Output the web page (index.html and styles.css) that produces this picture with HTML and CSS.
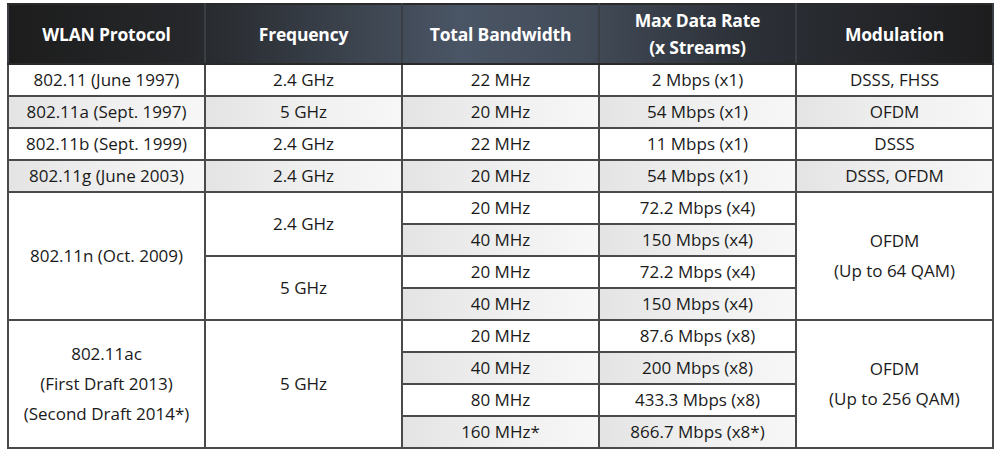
FILE: index.html
```html
<!DOCTYPE html>
<html>
<head>
<meta charset="utf-8">
<link rel="stylesheet" href="styles.css">
</head>
<body>
<table class="wlan">
  <colgroup><col><col><col><col><col></colgroup>
  <thead>
    <tr class="head">
      <th>WLAN Protocol</th>
      <th>Frequency</th>
      <th>Total Bandwidth</th>
      <th class="two">Max Data Rate<br>(x Streams)</th>
      <th>Modulation</th>
    </tr>
  </thead>
  <tbody>
    <tr>
      <td>802.11 (June 1997)</td><td>2.4 GHz</td><td>22 MHz</td><td>2 Mbps (x1)</td><td>DSSS, FHSS</td>
    </tr>
    <tr class="alt">
      <td>802.11a (Sept. 1997)</td><td>5 GHz</td><td>20 MHz</td><td>54 Mbps (x1)</td><td>OFDM</td>
    </tr>
    <tr>
      <td>802.11b (Sept. 1999)</td><td>2.4 GHz</td><td>22 MHz</td><td>11 Mbps (x1)</td><td>DSSS</td>
    </tr>
    <tr class="alt">
      <td>802.11g (June 2003)</td><td>2.4 GHz</td><td>20 MHz</td><td>54 Mbps (x1)</td><td>DSSS, OFDM</td>
    </tr>
    <tr>
      <td rowspan="4">802.11n (Oct. 2009)</td>
      <td rowspan="2">2.4 GHz</td>
      <td>20 MHz</td><td>72.2 Mbps (x4)</td>
      <td rowspan="4" class="multi">OFDM<br>(Up to 64 QAM)</td>
    </tr>
    <tr>
      <td class="shade">40 MHz</td><td class="shade">150 Mbps (x4)</td>
    </tr>
    <tr>
      <td rowspan="2">5 GHz</td>
      <td>20 MHz</td><td>72.2 Mbps (x4)</td>
    </tr>
    <tr>
      <td class="shade">40 MHz</td><td class="shade">150 Mbps (x4)</td>
    </tr>
    <tr>
      <td rowspan="4" class="multi">802.11ac<br>(First Draft 2013)<br>(Second Draft 2014*)</td>
      <td rowspan="4">5 GHz</td>
      <td>20 MHz</td><td>87.6 Mbps (x8)</td>
      <td rowspan="4" class="multi">OFDM<br>(Up to 256 QAM)</td>
    </tr>
    <tr>
      <td class="shade">40 MHz</td><td class="shade">200 Mbps (x8)</td>
    </tr>
    <tr>
      <td>80 MHz</td><td>433.3 Mbps (x8)</td>
    </tr>
    <tr>
      <td class="shade">160 MHz*</td><td class="shade">866.7 Mbps (x8*)</td>
    </tr>
  </tbody>
</table>
</body>
</html>
```

FILE: styles.css
```css
html, body {
  margin: 0;
  padding: 0;
  background: #ffffff;
}
body {
  padding: 3px 7px 0 7px;
  font-family: "Open Sans", "Noto Sans", sans-serif;
  color: #1a1a1a;
}
.wlan {
  border-collapse: collapse;
  table-layout: fixed;
  width: 986px;
}
.wlan col {
  width: 197px;
}
.head {
  height: 60px;
  background: linear-gradient(to right, #1d1d1d 0%, #25272a 18%, #3d4550 36%, #4a5565 46%, #434c59 58%, #2c3037 75%, #1d1d1e 100%);
}
.head th {
  color: #ffffff;
  font-size: 17.5px;
  font-weight: 700;
  letter-spacing: -0.2px;
  padding: 0;
  border: 2px solid #2a2a2a;
  border-left-color: #3a3f46;
  border-right-color: #3a3f46;
  line-height: 27px;
  text-align: center;
  vertical-align: middle;
}
.wlan td {
  height: 30px;
  padding: 0;
  border: 2px solid #4a4a4a;
  font-size: 17px;
  text-align: center;
  vertical-align: middle;
  line-height: 20px;
  white-space: nowrap;
}
.wlan td.multi {
  line-height: 30px;
}
.alt td,
.wlan td.shade {
  background: linear-gradient(to right, #e4e4e4 0%, #f0f0f0 55%, #f7f7f7 100%);
}
```
